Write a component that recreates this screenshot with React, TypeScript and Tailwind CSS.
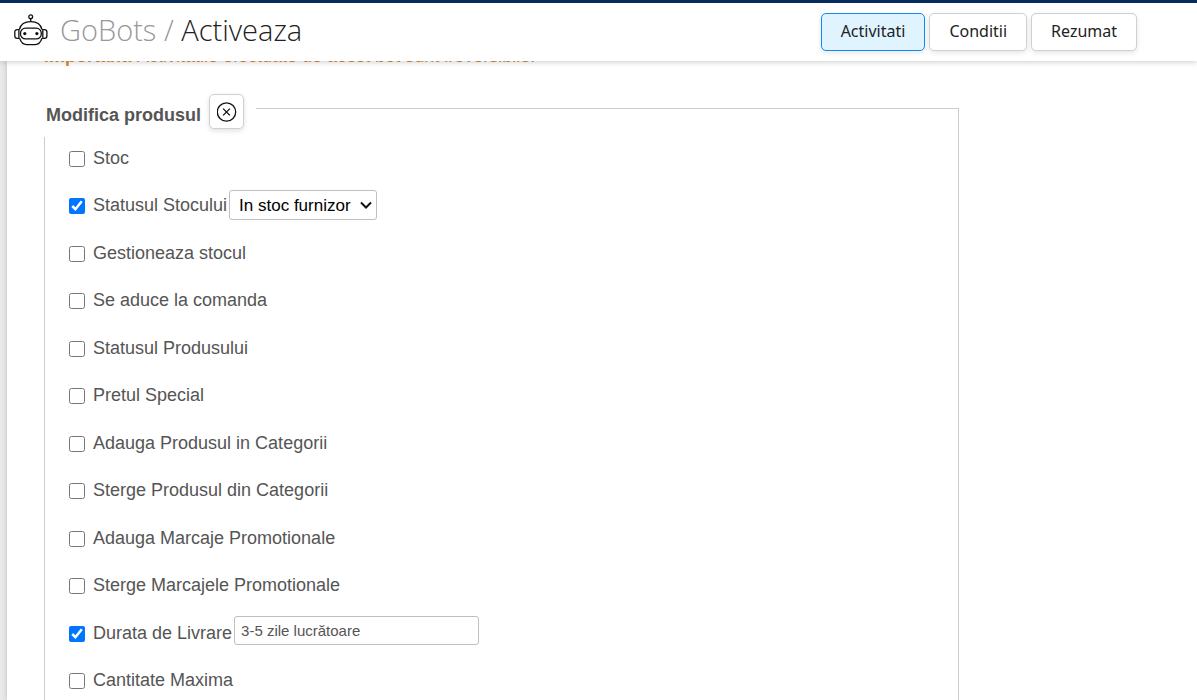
import { useState } from 'react'
import type { ReactNode } from 'react'
import clsx from 'clsx'

const TABS = ['Activitati', 'Conditii', 'Rezumat']

type Field = { id: string; label: string; checked?: boolean; extra?: ReactNode }

const FIELDS: Field[] = [
  { id: 'stoc', label: 'Stoc' },
  {
    id: 'status-stoc',
    label: 'Statusul Stocului',
    checked: true,
    extra: (
      <span className="relative ml-0.5 inline-flex items-center">
        <select
          aria-label="Valoare statusul stocului"
          className="h-[30px] w-[148px] appearance-none rounded-[3px] border border-[#bfbfbf] bg-white pt-0.5 pr-6 pl-[9px] text-[17px] text-black"
        >
          <option>In stoc furnizor</option>
          <option>In stoc</option>
          <option>Indisponibil</option>
        </select>
        <svg
          className="pointer-events-none absolute right-[5px] h-3 w-3"
          viewBox="0 0 12 12"
          fill="none"
          stroke="#111"
          strokeWidth="2"
        >
          <path d="M1 3.5l5 5 5-5" />
        </svg>
      </span>
    ),
  },
  { id: 'gestioneaza', label: 'Gestioneaza stocul' },
  { id: 'comanda', label: 'Se aduce la comanda' },
  { id: 'status-produs', label: 'Statusul Produsului' },
  { id: 'pret', label: 'Pretul Special' },
  { id: 'adauga-categorii', label: 'Adauga Produsul in Categorii' },
  { id: 'sterge-categorii', label: 'Sterge Produsul din Categorii' },
  { id: 'adauga-marcaje', label: 'Adauga Marcaje Promotionale' },
  { id: 'sterge-marcaje', label: 'Sterge Marcajele Promotionale' },
  {
    id: 'livrare',
    label: 'Durata de Livrare',
    checked: true,
    extra: (
      <input
        type="text"
        aria-label="Valoare durata de livrare"
        defaultValue="3-5 zile lucrătoare"
        className="mb-1.5 ml-0.5 h-[29px] w-[245px] rounded-[3px] border border-[#bfbfbf] bg-white px-1.5 text-[15px] text-[#555]"
      />
    ),
  },
  { id: 'cantitate', label: 'Cantitate Maxima' },
]

function RobotIcon() {
  return (
    <svg
      className="h-8 w-[34px] shrink-0"
      viewBox="0 0 34 32"
      fill="none"
      stroke="#111"
      strokeWidth="1.3"
      aria-hidden="true"
    >
      <circle cx="16.7" cy="2.8" r="1.9" />
      <path d="M16.7 4.7v3" />
      <path d="M5.4 15.5C6.6 10.7 11 7.7 16.7 7.7s10.1 3 11.3 7.8" />
      <path d="M5.6 24.3c1.3 3.8 3.7 6.3 7 6.3h8.6c3.3 0 5.5-2.5 6.8-6.3" />
      <rect x="6.5" y="14.2" width="20.8" height="10.7" rx="5" />
      <path d="M4.9 15.6H3.2c-1.5 0-2.4.9-2.4 2.4v4c0 1.5.9 2.4 2.4 2.4h1.7z" />
      <path d="M28.8 15.6h1.7c1.5 0 2.4.9 2.4 2.4v4c0 1.5-.9 2.4-2.4 2.4h-1.7z" />
      <circle cx="10.8" cy="19.6" r="1.6" fill="#111" stroke="none" />
      <circle cx="22.9" cy="19.6" r="1.6" fill="#111" stroke="none" />
    </svg>
  )
}

function Header() {
  const [active, setActive] = useState(TABS[0])

  return (
    <header className="relative z-10 flex h-[61px] shrink-0 items-center justify-between border-t-[3px] border-[#052c5e] bg-white pl-3.5 pr-[60px] shadow-[0_1px_6px_rgba(0,0,0,0.2)]">
      <div className="flex items-center gap-3 pb-1">
        <RobotIcon />
        <h1 className="font-['Open_Sans',sans-serif] text-[29px] leading-9 font-light text-[#999]">
          GoBots / <span className="text-[#222]">Activeaza</span>
        </h1>
      </div>
      <nav className="flex gap-1">
        {TABS.map((tab) => (
          <button
            key={tab}
            type="button"
            onClick={() => setActive(tab)}
            className={clsx(
              "h-[38px] rounded-[5px] border px-[19px] pb-0.5 font-['Noto_Sans',sans-serif] text-base text-[#222] shadow-[0_2px_5px_rgba(0,0,0,0.1)]",
              tab === active ? 'border-[#0d8bf2] bg-[#e0f4ff]' : 'border-[#d0d0d0] bg-white',
            )}
          >
            {tab}
          </button>
        ))}
      </nav>
    </header>
  )
}

/** One option of the product form: tick box, label and, for some, a value control. */
function FieldRow({ field }: { field: Field }) {
  return (
    <li className="flex h-[30px] items-center odd:mb-[17px] even:mb-[18px]">
      <input
        id={field.id}
        type="checkbox"
        defaultChecked={field.checked}
        className="mt-0.5 mr-2 h-4 w-4 accent-[#0075ff]"
      />
      <label htmlFor={field.id}>{field.label}</label>
      {field.extra}
    </li>
  )
}

export default function App() {
  return (
    <div className="flex h-screen flex-col overflow-hidden bg-[#e9e9e9] font-['Liberation_Sans',Arial,sans-serif] text-[18px] leading-6 text-[#555]">
      <Header />
      <main className="ml-[7px] min-h-0 flex-1 bg-white pr-[238px] pl-[37px] shadow-[0_0_5px_rgba(0,0,0,0.2)]">
        <p className="-mt-[17px] text-[#e08a2e]">
          <b>Important!</b> Activitatile efectuate de acest bot sunt ireversibile.
        </p>
        <fieldset className="mt-3 border border-[#ccc]">
          <legend className="-ml-px flex h-[57px] items-center pr-3 pl-0.5 font-bold">
            <span className="mt-3">Modifica produsul</span>
            <button
              type="button"
              aria-label="Sterge activitatea"
              className="mt-1.5 ml-2 flex h-[35px] w-[35px] items-center justify-center rounded-[5px] border border-[#d0d0d0] bg-white shadow-[0_2px_5px_rgba(0,0,0,0.12)]"
            >
              <svg className="h-5 w-5" viewBox="0 0 20 20" fill="none" stroke="#111" strokeWidth="1.3">
                <circle cx="9.5" cy="10" r="9.2" />
                <path d="M6.1 6.6l6.8 6.8M12.9 6.6l-6.8 6.8" />
              </svg>
            </button>
          </legend>
          <ul className="pt-1.5 pl-6">
            {FIELDS.map((field) => (
              <FieldRow key={field.id} field={field} />
            ))}
          </ul>
        </fieldset>
      </main>
    </div>
  )
}
